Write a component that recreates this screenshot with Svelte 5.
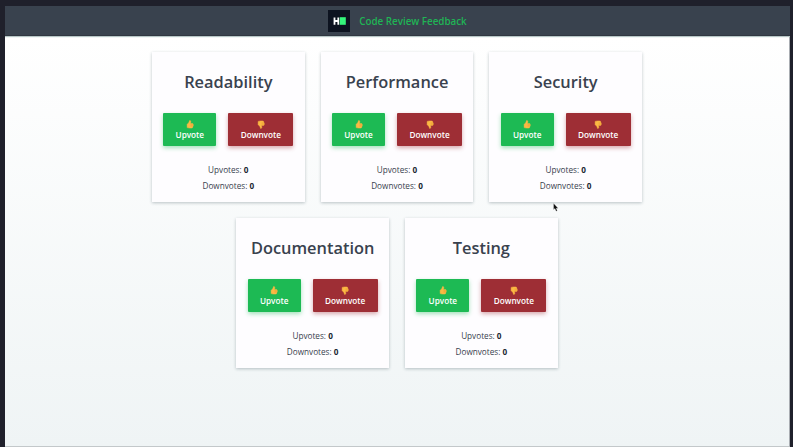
<script>
  const aspects = $state(
    ['Readability', 'Performance', 'Security', 'Documentation', 'Testing'].map((name) => ({ name, up: 0, down: 0 }))
  );
</script>

{#snippet thumb(down)}
  <svg class="thumb" class:down viewBox="0 0 18 20" aria-hidden="true">
    <path d="M8 1.2c1.9-.5 3.1.8 2.8 3L10.2 8h4.4c2 0 2.5 2 1.3 2.8 1 .8.8 2.1-.2 2.6.6 1 .2 2-.8 2.4.2 1.3-.7 2.3-2.2 2.3H7.4L2.5 17V9.7l3.2-3.2C7.2 4.8 7 3 8 1.2Z" fill="#fbb944" stroke="#fbb944" />
    <path d="M10.5 10.7h5M10.2 13.4h5" stroke="#d9872b" stroke-width=".8" fill="none" />
  </svg>
{/snippet}

<div class="window">
  <header>
    <svg class="logo" viewBox="0 0 22 22" aria-hidden="true">
      <rect width="22" height="22" fill="#0d1320" />
      <path d="M6.5 7.5v7.2M10.3 7.5v7.2M6.5 11h4" stroke="#fff" stroke-width="1.8" fill="none" />
      <rect x="11.8" y="7.2" width="6" height="7.6" fill="#35f57b" />
    </svg>
    <h1>Code Review Feedback</h1>
  </header>
  <main>
    {#each aspects as aspect}
      <section class="card">
        <h2>{aspect.name}</h2>
        <div class="actions">
          <button class="upvote" onclick={() => aspect.up++}>{@render thumb(false)}<span>Upvote</span></button>
          <button class="downvote" onclick={() => aspect.down++}>{@render thumb(true)}<span>Downvote</span></button>
        </div>
        <p>Upvotes: <strong>{aspect.up}</strong></p>
        <p>Downvotes: <strong>{aspect.down}</strong></p>
      </section>
    {/each}
  </main>
  <svg class="cursor" viewBox="0 0 6 9" aria-hidden="true">
    <path d="M.5.3v6.5l1.4-1.2 1.2 2.7 1.2-.6-1.1-2.5h2Z" fill="#111" stroke="#fff" stroke-width=".3" />
  </svg>
</div>

<style>
  :global(body) {
    background: #1f202b;
  }
  .window {
    position: relative;
    box-sizing: border-box;
    height: 447px;
    padding: 6px 3px 0 5px;
    font-family: 'Open Sans', 'Noto Sans', sans-serif;
    color: #39424e;
    display: flex;
    flex-direction: column;
    overflow: hidden;
  }
  header {
    box-sizing: border-box;
    height: 30px;
    padding-top: 1px;
    flex: none;
    display: flex;
    align-items: center;
    justify-content: center;
    gap: 9px;
    background: #39424e;
    border-bottom: 1px solid #303741;
    box-shadow: 0 1px 1px #b7c6c6;
    clip-path: inset(0 0 -3px 0);
    z-index: 1;
  }
  .logo {
    width: 22px;
    height: 22px;
  }
  h1 {
    margin: 0;
    padding-top: 2px;
    font-size: 9.8px;
    line-height: 14px;
    font-weight: 600;
    color: #20b455;
  }
  main {
    flex: 1;
    display: flex;
    flex-wrap: wrap;
    justify-content: center;
    align-content: flex-start;
    gap: 16px;
    padding: 16px 140px 0;
    background: linear-gradient(#fff, #eff4f5);
    border-right: 1px solid #a9adb2;
    border-bottom: 1px solid #c3c8ca;
  }
  .card {
    box-sizing: border-box;
    width: 152.7px;
    height: 150px;
    padding-top: 18px;
    background: #fefdff;
    box-shadow: 0 1px 3px rgba(40, 65, 75, 0.3);
    text-align: center;
  }
  h2 {
    margin: 0;
    font-size: 16.4px;
    line-height: 24px;
    font-weight: 600;
  }
  .actions {
    display: flex;
    justify-content: center;
    gap: 12px;
    margin: 19px 0 16.4px;
  }
  button {
    box-sizing: border-box;
    height: 33px;
    padding: 7px 0 0;
    border: 0;
    border-radius: 1px;
    display: flex;
    flex-direction: column;
    align-items: center;
    color: #fff;
    font: 600 8.2px/12px 'Open Sans', 'Noto Sans', sans-serif;
  }
  .upvote {
    width: 53px;
    background: #1dba54;
    box-shadow: 0 2px 4px rgba(29, 186, 84, 0.4);
  }
  .downvote {
    width: 65px;
    background: #9e2e35;
    box-shadow: 0 2px 4px rgba(158, 46, 53, 0.4);
  }
  .thumb {
    width: 8px;
    height: 9px;
  }
  .thumb.down {
    transform: rotate(180deg) scaleX(-1);
  }
  p {
    margin: 0;
    font-size: 8.2px;
    line-height: 16px;
  }
  strong {
    font-weight: 700;
    color: #202832;
  }
  .cursor {
    position: absolute;
    left: 553px;
    top: 203px;
    width: 6px;
    height: 9px;
  }
</style>
